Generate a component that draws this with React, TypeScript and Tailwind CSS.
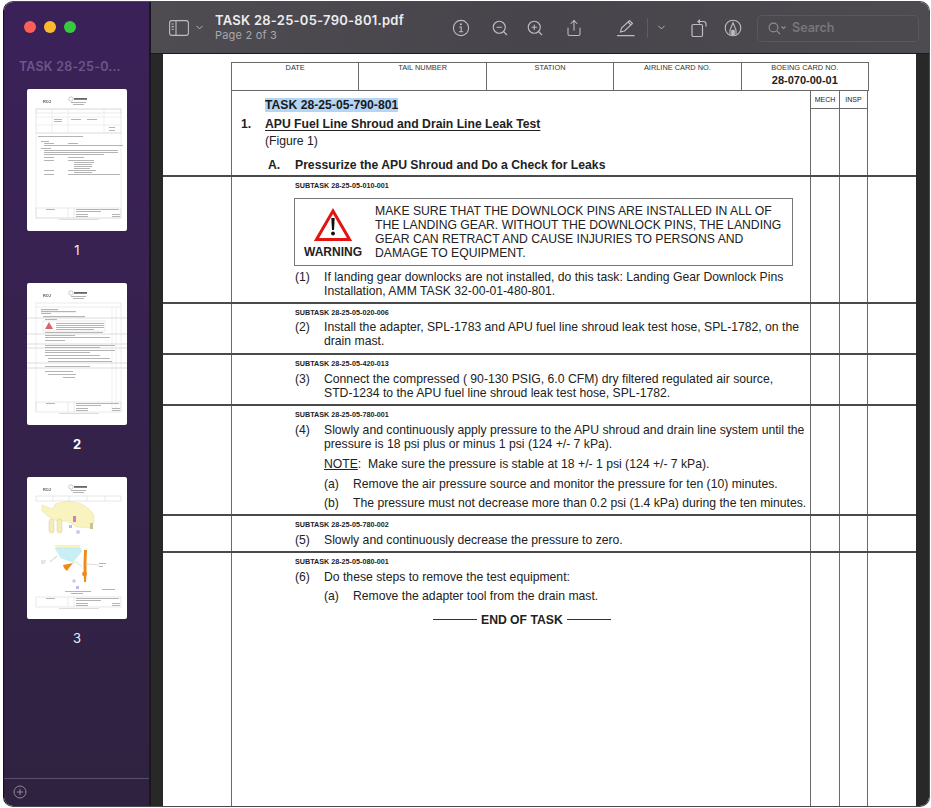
import type { ReactNode } from "react";
import { ZoomIn, ZoomOut, Share, ChevronDown } from "lucide-react";

const ui = "font-['Inter',sans-serif]";
const doc = "font-['Liberation_Sans',Arial,sans-serif]";

function Greek({ bars, color = "#b4b4b4" }: { bars: number[][]; color?: string }) {
  return (
    <>
      {bars.map(([x, y, w, h = 1], i) => (
        <rect key={i} x={x} y={y} width={w} height={h} fill={color} />
      ))}
    </>
  );
}

function ThumbHead({ label }: { label?: boolean }) {
  return (
    <>
      <text x="16" y="14" fontSize="3.8" fontWeight="700" fill="#555" fontFamily="Liberation Sans">ROJ</text>
      <circle cx="44" cy="10" r="2.2" fill="none" stroke="#999" strokeWidth="0.5" />
      <rect x="47" y="9" width="13" height="1.8" fill="#666" />
      <rect x="44" y="13" width="15" height="0.9" fill="#aaa" />
      <rect x="46" y="15" width="11" height="0.9" fill="#aaa" />
      {label && <rect x="9" y="20" width="85" height="4" fill="none" stroke="#c4c4c4" strokeWidth="0.35" />}
    </>
  );
}

function ThumbFoot({ y = 119 }: { y?: number }) {
  return (
    <>
      <rect x="9" y={y} width="85" height="10" fill="none" stroke="#c8c8c8" strokeWidth="0.4" />
      <line x1="41" y1={y} x2="41" y2={y + 10} stroke="#c8c8c8" strokeWidth="0.35" />
      <line x1="47" y1={y} x2="47" y2={y + 10} stroke="#c8c8c8" strokeWidth="0.35" />
      <Greek bars={[[19, y + 1, 9], [49, y + 1, 43], [49, y + 3, 25], [49, y + 6, 12], [49, y + 8, 12], [85, y + 6, 8], [85, y + 8, 8]]} />
      <rect x="32" y={y + 11} width="40" height="0.8" fill="#d4d4d4" />
    </>
  );
}

function ThumbOne() {
  return (
    <svg viewBox="0 0 100 142" className="w-full h-full">
      <ThumbHead label />
      <rect x="9" y="20" width="85" height="24" fill="none" stroke="#c4c4c4" strokeWidth="0.4" />
      <path d="M9 28H94M9 36H94M25 20V44M41 20V44M77 20V44" stroke="#d2d2d2" strokeWidth="0.35" />
      <rect x="9" y="44" width="85" height="85" fill="none" stroke="#d2d2d2" strokeWidth="0.4" />
      <Greek
        bars={[
          [27, 30, 8], [27, 32, 8], [44, 30, 10], [60, 30, 10], [82, 38, 6], [82, 41, 6],
          [11, 47, 45], [14, 52, 8], [17, 54, 10], [41, 54, 10], [17, 56, 24], [41, 56, 55],
          [14, 59, 10], [17, 61, 74], [17, 63, 74], [17, 65, 60], [17, 68, 10], [41, 68, 16],
          [17, 71, 10], [41, 71, 26], [47, 73, 20], [47, 75, 18], [47, 77, 18], [47, 79, 16],
          [17, 81, 10], [41, 81, 28], [47, 83, 18], [17, 85, 10], [41, 85, 52],
        ]}
      />
      <ThumbFoot />
    </svg>
  );
}

function ThumbTwo() {
  return (
    <svg viewBox="0 0 100 142" className="w-full h-full">
      <ThumbHead label />
      <path d="M9 24V128M85 24V128M89 24V128M94 24V128" stroke="#d4d4d4" strokeWidth="0.35" />
      <path d="M0 35H100M0 51H100M0 61H100M0 65H100M0 80H100M0 85H100" stroke="#c8c8c8" strokeWidth="0.6" />
      <Greek
        bars={[
          [14, 26, 17, 1.2], [14, 28, 35, 1.2], [14, 30, 10], [16, 33, 42, 1.2], [18, 36, 12],
          [29, 40, 48], [29, 42, 48], [29, 44, 48], [29, 46, 38], [18, 49, 58], [18, 52, 30],
          [18, 54, 65], [18, 57, 20], [18, 62, 70], [18, 64, 55], [18, 67, 70], [18, 69, 45],
          [18, 72, 55], [21, 75, 62], [21, 78, 64], [18, 83, 45], [18, 88, 28], [21, 91, 28], [36, 94, 12],
        ]}
      />
      <rect x="16" y="38" width="62" height="10" fill="none" stroke="#c4c4c4" strokeWidth="0.35" />
      <path d="M22 39L26 46H18Z" fill="#d8646a" />
      <ThumbFoot />
    </svg>
  );
}

function ThumbThree() {
  return (
    <svg viewBox="0 0 100 142" className="w-full h-full">
      <ThumbHead />
      <rect x="9" y="19" width="85" height="5" fill="none" stroke="#c4c4c4" strokeWidth="0.4" />
      <path d="M26 24V19M42 24V19M60 24V19M78 24V19" stroke="#c4c4c4" strokeWidth="0.35" />
      <path d="M15 28L26 32L28 27L36 25C48 23 60 27 67 38L67 46L62 51L50 50L40 44L30 44L22 40L15 34Z" fill="#f8f3bf" stroke="#e0d89c" strokeWidth="0.4" />
      <rect x="22" y="42" width="5" height="14" rx="2.5" fill="#f3edb8" stroke="#cfc68e" strokeWidth="0.4" />
      <rect x="30" y="42" width="5" height="14" rx="2.5" fill="#f3edb8" stroke="#cfc68e" strokeWidth="0.4" />
      <rect x="63" y="46" width="3" height="6" fill="#c9c190" />
      <rect x="46" y="39" width="3" height="6" fill="#d77ac4" />
      <rect x="42" y="48" width="3" height="3" fill="#b9b9f2" />
      <circle cx="51" cy="55" r="2" fill="#c9c9f5" />
      <path d="M27 68H54L52 71H30Z" fill="#f9f2bb" />
      <path d="M28 71H53L55 74L46 85L34 81Z" fill="#c8f0f4" stroke="#a8d8e0" strokeWidth="0.3" />
      <path d="M30 79L23 85M14 84H19M14 86H18" stroke="#999" strokeWidth="0.5" />
      <path d="M57 73H60L59.5 82V96L59 105H57L56.5 88Z" fill="#ef8a17" />
      <circle cx="57.5" cy="97" r="2.4" fill="#ef8a17" />
      <path d="M36 88L46 86L42 91L40 94L37 91Z" fill="#ef8a17" />
      <path d="M46 86C50 83 52 88 55 90M60 87L72 88" stroke="#999" strokeWidth="0.35" fill="none" />
      <circle cx="47" cy="104" r="1.8" fill="#c9c9f5" />
      <rect x="49" y="109" width="3" height="3" fill="#b9b9f2" />
      <Greek bars={[[72, 86, 7], [72, 89, 4], [38, 114, 26], [44, 116, 12], [75, 112, 13]]} />
      <ThumbFoot y={120} />
    </svg>
  );
}

const thumbs = [
  { n: "1", body: <ThumbOne /> },
  { n: "2", body: <ThumbTwo />, active: true },
  { n: "3", body: <ThumbThree /> },
];

function Sidebar() {
  return (
    <aside className={`w-[145px] shrink-0 flex flex-col bg-gradient-to-b from-[#3b2159] to-[#2f2240] ${ui}`}>
      <div className="flex gap-[8px] pl-[20px] pt-[19px]">
        <span className="w-3 h-3 rounded-full bg-[#fb5f57]" />
        <span className="w-3 h-3 rounded-full bg-[#fcbb2e]" />
        <span className="w-3 h-3 rounded-full bg-[#39c93f]" />
      </div>
      <div className="mt-[26px] pl-[15px] text-[12.5px] leading-[16px] font-semibold text-[#6d5687] tracking-[0.2px] whitespace-nowrap">
        TASK 28-25-0...
      </div>
      <div className="flex-1 pt-[14px] pl-px flex flex-col items-center gap-[52px]">
        {thumbs.map((t) => (
          <div key={t.n} className="relative w-[100px] h-[142px]">
            <div className="w-full h-full bg-white rounded-[2px] overflow-hidden">
              <div className="w-full h-full blur-[0.5px]">{t.body}</div>
            </div>
            <div className={`absolute left-0 right-0 top-[153px] text-center text-[13px] leading-[16px] ${t.active ? "font-bold text-white" : "text-[#f0f0f2]"}`}>
              {t.n}
            </div>
          </div>
        ))}
      </div>
      <div className="h-[28px] border-t border-[#57506a] pl-[9px] pt-[6px] shrink-0">
        <svg width="14" height="14" viewBox="0 0 14 14" fill="none" stroke="#8f8a99" strokeWidth="1">
          <circle cx="7" cy="7" r="6" />
          <path d="M7 3.8V10.2M3.8 7H10.2" />
        </svg>
      </div>
    </aside>
  );
}

const icon = "#bdbcc0";

function Toolbar() {
  return (
    <header className={`h-[52px] shrink-0 flex items-center bg-gradient-to-r from-[#4e4c51] via-[#47454b] to-[#4d4b50] border-b border-[#1b1a1c] ${ui}`}>
      <svg className="ml-[18px] shrink-0" width="20" height="16" viewBox="0 0 20 16" fill="none" stroke={icon} strokeWidth="1.1">
        <rect x="0.6" y="0.6" width="18.8" height="14.8" rx="2.4" />
        <path d="M7 0.6V15.4" />
        <path d="M2.6 4H4.8M2.6 6.6H4.8M2.6 9.2H4.8" />
      </svg>
      <ChevronDown className="ml-[5px] shrink-0" size={11} color={icon} strokeWidth={2} />
      <div className="ml-[10px] w-[237px] shrink-0 pb-px">
        <div className="text-[13px] leading-[16px] font-semibold text-[#ececee] tracking-[0.25px] whitespace-nowrap">TASK 28-25-05-790-801.pdf</div>
        <div className="text-[11px] leading-[15px] text-[#a9a8ac] tracking-[0.2px]">Page 2 of 3</div>
      </div>
      <div className="flex items-center shrink-0">
        <svg width="18" height="18" viewBox="0 0 18 18" fill="none" stroke={icon} strokeWidth="1.1">
          <circle cx="9" cy="9" r="7.6" />
          <path d="M7.2 8H9.2V12.8M7 12.8H11.2" />
          <circle cx="8.9" cy="5.2" r="0.5" fill={icon} />
        </svg>
        <ZoomOut className="ml-[21px]" size={18} color={icon} strokeWidth={1.5} />
        <ZoomIn className="ml-[17px]" size={18} color={icon} strokeWidth={1.5} />
        <Share className="ml-[21px]" size={18} color={icon} strokeWidth={1.4} />
        <svg className="ml-[33px]" width="20" height="18" viewBox="0 0 20 18" fill="none" stroke={icon} strokeWidth="1.1">
          <path d="M4.5 13L5.5 9L13.5 1.5L16.5 4.5L8.5 12Z" />
          <path d="M12 3L15 6" />
          <path d="M1 16.6H18.5" strokeWidth="1.2" />
        </svg>
        <span className="ml-[11px] w-px h-5 bg-[#5f5d63]" />
        <ChevronDown className="ml-[8px]" size={11} color={icon} strokeWidth={2} />
        <svg className="ml-[24px]" width="17" height="20" viewBox="0 0 17 20" fill="none" stroke={icon} strokeWidth="1.2">
          <rect x="1" y="6.5" width="10.5" height="12" rx="1.2" />
          <path d="M6.5 3.5H12.5C14 3.5 15 4.5 15 6V8.5" />
          <path d="M9 1L6.2 3.5L9 6" fill={icon} stroke="none" />
        </svg>
        <svg className="ml-[16px]" width="18" height="18" viewBox="0 0 18 18" fill="none" stroke={icon} strokeWidth="1.1">
          <circle cx="9" cy="9" r="7.8" />
          <path d="M6 15.6V11L9 3.8L12 11V15.6" />
          <path d="M7.2 11.5C7.2 10.4 10.8 10.4 10.8 11.5V15.9H7.2Z" fill={icon} stroke="none" />
        </svg>
        <div className="ml-[15px] w-[162px] h-[27px] mt-px border border-[#5a585e] rounded-[5px] flex items-center pl-[10px] bg-[#4b494e]">
          <svg width="19" height="13" viewBox="0 0 19 13" fill="none" stroke="#8e8d92" strokeWidth="1.1">
            <circle cx="5.5" cy="5.5" r="4.4" />
            <path d="M8.8 8.8L12 12" />
            <path d="M13.5 4.5L15.5 6.5L17.5 4.5" />
          </svg>
          <span className="ml-[5px] text-[12.5px] font-semibold text-[#77767b]">Search</span>
        </div>
      </div>
    </header>
  );
}

function Section({ children, h, mech, last }: { children?: ReactNode; h: number; mech?: boolean; last?: boolean }) {
  return (
    <section
      style={{ height: h }}
      className={`shrink-0 ${last ? "" : "border-b-[2px] border-[#4a4a4a]"}`}
    >
      <div className="ml-[68px] w-[638px] h-full flex border-l border-[#6a6a6a]">
        <div className="w-[578px] shrink-0">{children}</div>
        <div className="w-[29px] shrink-0 border-l border-[#6a6a6a]">
          {mech && <div className="h-[18px] border-b border-[#6a6a6a] text-[7px] leading-[18px] text-center text-[#222]">MECH</div>}
        </div>
        <div className="w-[29px] shrink-0 border-x border-[#6a6a6a]">
          {mech && <div className="h-[18px] border-b border-[#6a6a6a] text-[7px] leading-[18px] text-center text-[#222]">INSP</div>}
        </div>
      </div>
    </section>
  );
}

function Subtask({ id }: { id: string }) {
  return (
    <div className="pl-[63px] pt-[3.5px] text-[7.2px] leading-[9px] font-bold text-[#222]">SUBTASK {id}</div>
  );
}

function Step({ n, lines, top }: { n: string; lines: string[]; top: number }) {
  return (
    <div style={{ marginTop: top }} className="flex pl-[63px] text-[12.2px] leading-[14.3px] text-[#222]">
      <span className="w-[29px] shrink-0">{n}</span>
      <div className="whitespace-nowrap">
        {lines.map((l) => (
          <div key={l}>{l}</div>
        ))}
      </div>
    </div>
  );
}

function SubStep({ n, text, top }: { n: string; text: string; top: number }) {
  return (
    <div style={{ marginTop: top }} className="flex pl-[92px] text-[12.2px] leading-[14.3px] text-[#222] whitespace-nowrap">
      <span className="w-[29px] shrink-0">{n}</span>
      <span>{text}</span>
    </div>
  );
}

function HeaderCell({ label, value }: { label: string; value?: string }) {
  return (
    <div className="flex-1 border-l first:border-l-0 border-[#6a6a6a] text-center">
      <div className="text-[7.4px] leading-[9px] text-[#333]">{label}</div>
      {value && <div className="mt-[2px] text-[11px] leading-[13px] font-bold text-[#222]">{value}</div>}
    </div>
  );
}

function WarningBox() {
  return (
    <div className="ml-[62px] mt-[8px] w-[499px] h-[68px] border border-[#777] flex text-[12.2px] leading-[14.3px] text-[#222]">
      <div className="w-[80px] shrink-0 flex flex-col items-center pt-[9px]">
        <svg className="ml-[-4px]" width="38" height="34" viewBox="0 0 38 34">
          <path d="M19 3L35.5 31.5H2.5Z" fill="#fff" stroke="#e21414" strokeWidth="3" strokeLinejoin="miter" />
          <path d="M17.3 10H20.7L20 22H18Z" fill="#111" />
          <circle cx="19" cy="25.5" r="1.9" fill="#111" />
        </svg>
        <div className="mt-[3px] font-bold text-[12px] leading-[14px] ml-[-4px]">WARNING</div>
      </div>
      <div className="pt-[5px] whitespace-nowrap">
        <div>MAKE SURE THAT THE DOWNLOCK PINS ARE INSTALLED IN ALL OF</div>
        <div>THE LANDING GEAR. WITHOUT THE DOWNLOCK PINS, THE LANDING</div>
        <div>GEAR CAN RETRACT AND CAUSE INJURIES TO PERSONS AND</div>
        <div>DAMAGE TO EQUIPMENT.</div>
      </div>
    </div>
  );
}

function Page() {
  return (
    <div className={`w-[753px] shrink-0 h-full bg-white flex flex-col overflow-hidden ${doc}`}>
      <div className="ml-[68px] mt-[8px] w-[638px] h-[29px] shrink-0 flex border border-[#6a6a6a]">
        <HeaderCell label="DATE" />
        <HeaderCell label="TAIL NUMBER" />
        <HeaderCell label="STATION" />
        <HeaderCell label="AIRLINE CARD NO." />
        <HeaderCell label="BOEING CARD NO." value="28-070-00-01" />
      </div>
      <Section h={86} mech>
        <div className="pl-[33px] pt-[7px] text-[12.2px] leading-[14px]">
          <span className="bg-[#b5d5f5] font-bold text-[#1a1a1a]">TASK 28-25-05-790-801</span>
        </div>
        <div className="flex pl-[9px] mt-[5px] text-[12.2px] leading-[14px] font-bold text-[#222]">
          <span className="w-[24px]">1.</span>
          <span className="underline underline-offset-2">APU Fuel Line Shroud and Drain Line Leak Test</span>
        </div>
        <div className="pl-[33px] mt-[3px] text-[12.2px] leading-[14px] text-[#222]">(Figure 1)</div>
        <div className="flex pl-[36px] mt-[10px] text-[12.2px] leading-[14px] font-bold text-[#222]">
          <span className="w-[27px]">A.</span>
          <span>Pressurize the APU Shroud and Do a Check for Leaks</span>
        </div>
      </Section>
      <Section h={127}>
        <Subtask id="28-25-05-010-001" />
        <WarningBox />
        <Step n="(1)" top={4} lines={["If landing gear downlocks are not installed, do this task: Landing Gear Downlock Pins", "Installation, AMM TASK 32-00-01-480-801."]} />
      </Section>
      <Section h={51}>
        <Subtask id="28-25-05-020-006" />
        <Step n="(2)" top={3.5} lines={["Install the adapter, SPL-1783 and APU fuel line shroud leak test hose, SPL-1782, on the", "drain mast."]} />
      </Section>
      <Section h={51}>
        <Subtask id="28-25-05-420-013" />
        <Step n="(3)" top={4.5} lines={["Connect the compressed ( 90-130 PSIG, 6.0 CFM) dry filtered regulated air source,", "STD-1234 to the APU fuel line shroud leak test hose, SPL-1782."]} />
      </Section>
      <Section h={110}>
        <Subtask id="28-25-05-780-001" />
        <Step n="(4)" top={4.5} lines={["Slowly and continuously apply pressure to the APU shroud and drain line system until the", "pressure is 18 psi plus or minus 1 psi (124 +/- 7 kPa)."]} />
        <div className="mt-[5px] pl-[92px] text-[12.2px] leading-[14.3px] text-[#222] whitespace-nowrap">
          <span className="underline">NOTE</span>:&nbsp; Make sure the pressure is stable at 18 +/- 1 psi (124 +/- 7 kPa).
        </div>
        <SubStep n="(a)" top={6} text="Remove the air pressure source and monitor the pressure for ten (10) minutes." />
        <SubStep n="(b)" top={5} text="The pressure must not decrease more than 0.2 psi (1.4 kPa) during the ten minutes." />
      </Section>
      <Section h={37}>
        <Subtask id="28-25-05-780-002" />
        <Step n="(5)" top={4.5} lines={["Slowly and continuously decrease the pressure to zero."]} />
      </Section>
      <Section h={256} last>
        <Subtask id="28-25-05-080-001" />
        <Step n="(6)" top={4.5} lines={["Do these steps to remove the test equipment:"]} />
        <SubStep n="(a)" top={5} text="Remove the adapter tool from the drain mast." />
        <div className="mt-[9px] pl-[201px] flex items-center gap-[4px] text-[12.2px] leading-[14px] font-bold text-[#222]">
          <span className="w-[44px] h-[1.5px] bg-[#333]" />
          <span>END OF TASK</span>
          <span className="w-[44px] h-[1.5px] bg-[#333]" />
        </div>
      </Section>
    </div>
  );
}

export default function App() {
  return (
    <div className="w-[931px] h-[808px] bg-white pl-[3px] pt-[1px] pb-px pr-px overflow-hidden">
      <div className="w-[927px] h-[806px] rounded-[10px] overflow-hidden flex border border-[#4a4a4c] border-l-[#111]">
        <Sidebar />
        <main className="flex-1 min-w-0 flex flex-col border-l-2 border-[#19181a]">
          <Toolbar />
          <div className="flex-1 min-h-0 flex bg-[#282828] pl-[12px]">
            <Page />
          </div>
        </main>
      </div>
    </div>
  );
}
